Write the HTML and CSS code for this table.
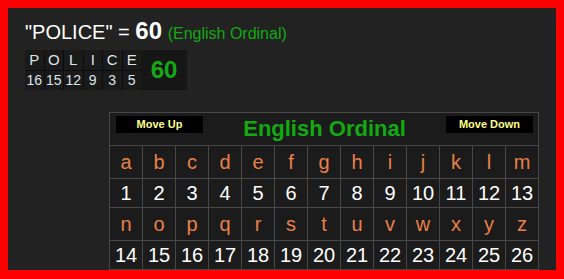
FILE: index.html
```html
<!DOCTYPE html>
<html>
<head>
<meta charset="utf-8">
<link rel="stylesheet" href="styles.css">
</head>
<body>
<div class="page">
  <div class="title">"POLICE" = <b class="total">60</b> <span class="cipher">(English Ordinal)</span></div>
  <div class="breakdown">
    <div class="cells">
      <span class="l">P</span><span class="l">O</span><span class="l">L</span><span class="l">I</span><span class="l">C</span><span class="l">E</span>
      <span class="n">16</span><span class="n">15</span><span class="n">12</span><span class="n">9</span><span class="n">3</span><span class="n">5</span>
    </div>
    <div class="sum">60</div>
  </div>
  <table class="chart">
    <tr>
      <td class="head" colspan="13">
        <div class="headrow">
          <button class="btn">Move Up</button>
          <span class="name">English Ordinal</span>
          <button class="btn">Move Down</button>
        </div>
      </td>
    </tr>
    <tr class="letters"><td>a</td><td>b</td><td>c</td><td>d</td><td>e</td><td>f</td><td>g</td><td>h</td><td>i</td><td>j</td><td>k</td><td>l</td><td>m</td></tr>
    <tr class="nums"><td>1</td><td>2</td><td>3</td><td>4</td><td>5</td><td>6</td><td>7</td><td>8</td><td>9</td><td>10</td><td>11</td><td>12</td><td>13</td></tr>
    <tr class="letters"><td>n</td><td>o</td><td>p</td><td>q</td><td>r</td><td>s</td><td>t</td><td>u</td><td>v</td><td>w</td><td>x</td><td>y</td><td>z</td></tr>
    <tr class="nums"><td>14</td><td>15</td><td>16</td><td>17</td><td>18</td><td>19</td><td>20</td><td>21</td><td>22</td><td>23</td><td>24</td><td>25</td><td>26</td></tr>
  </table>
</div>
</body>
</html>
```
FILE: styles.css
```css
html, body {
  background: #ff0000;
}
body {
  margin: 8px;
  font-family: "Liberation Sans", Arial, sans-serif;
}
.page {
  height: 262px;
  background: #222222;
  overflow: hidden;
  padding: 9px 17px 0;
  box-sizing: border-box;
}
.title {
  height: 29px;
  line-height: 28px;
  font-size: 20px;
  color: #ffffff;
  margin-bottom: 4px;
  white-space: nowrap;
}
.total {
  font-size: 24px;
  font-weight: bold;
}
.cipher {
  font-size: 16px;
  color: #11aa11;
}
.breakdown {
  display: flex;
  width: 162px;
  height: 40px;
  background: #161616;
}
.cells {
  display: grid;
  grid-template-columns: repeat(6, 18.5px);
  grid-template-rows: 20px 19px;
  gap: 1px;
  background: #0c0c0c;
}
.cells span {
  background: #1a1a1a;
  text-align: center;
  color: #dde4ec;
}
.cells .l {
  font-size: 15px;
  line-height: 20px;
}
.cells .n {
  font-size: 14px;
  line-height: 19px;
}
.sum {
  flex: 1;
  text-align: center;
  font-size: 24px;
  font-weight: bold;
  color: #11aa11;
  line-height: 40px;
}
.chart {
  margin: 22px 0 0 auto;
  border-collapse: collapse;
  background: #1b1b1b;
}
.chart td {
  border: 1px solid #474747;
  width: 32px;
  padding: 0;
  text-align: center;
  font-size: 20px;
}
.chart td.head {
  width: auto;
  padding: 3px 5px 4px 6px;
}
.headrow {
  display: flex;
  align-items: flex-start;
}
.btn {
  width: 87px;
  height: 17px;
  padding: 0;
  border: 0;
  background: #000000;
  color: #ffff88;
  font-family: "Liberation Sans", Arial, sans-serif;
  font-size: 11px;
  font-weight: bold;
  line-height: 17px;
}
.name {
  flex: 1;
  text-align: center;
  font-size: 22px;
  font-weight: bold;
  color: #11aa11;
  line-height: 25px;
}
.letters td {
  height: 32px;
  line-height: 32px;
  color: #ea8048;
}
.nums td {
  height: 28px;
  line-height: 28px;
  color: #ffffff;
}
```
